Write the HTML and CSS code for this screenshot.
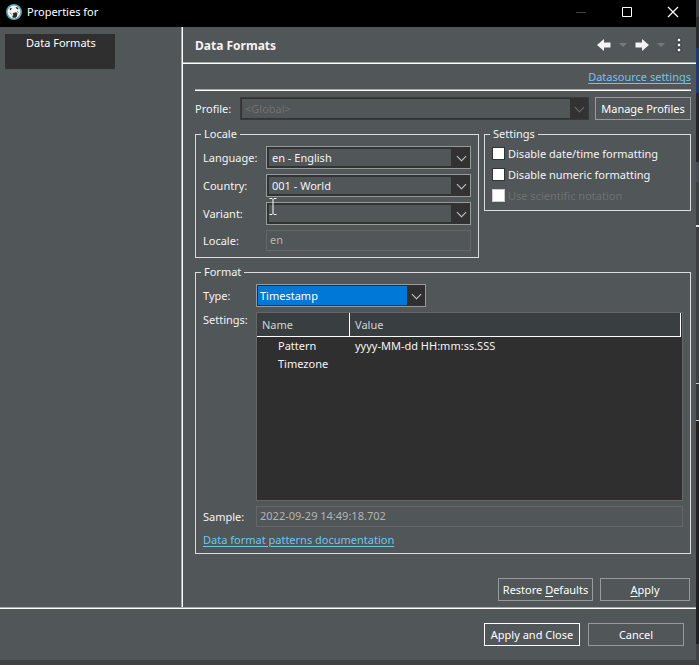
FILE: index.html
```html
<!DOCTYPE html>
<html lang="en">
<head>
    <meta charset="UTF-8">
    <meta name="viewport" content="width=device-width, initial-scale=1.0">
    <title>Properties for</title>
    <link rel="stylesheet" href="styles.css">
</head>
<body>
    <div class="desktop">
    <div class="window">
        <header class="titlebar">
            <svg class="app-icon" width="16" height="16" viewBox="0 0 16 16">
                <circle cx="8" cy="8" r="7.2" fill="#f4f1ee" stroke="#4fa8b5" stroke-width="1.6"/>
                <path d="M3.500 5 5 3.800l.8.700L4.500 6.500zM9.500 3.200h1.800l1.200 1.600-.8.800-1.300-1zM6.500 9.500l3-1.300 1.800.8-.3 3.300L9.500 13.800H6.800l-.5-1.800 1.200-1z" fill="#2b2423"/>
                <path d="M4 8.500 5.500 10.500M11.500 7l.8 2" stroke="#8d8583" fill="none"/>
            </svg>
            <span class="titlebar-text">Properties for</span>
            <button type="button" class="win-btn" aria-label="Minimize" disabled>
                <svg width="12" height="12" viewBox="0 0 12 12"><path d="M1 6.500h10" stroke="#444"/></svg>
            </button>
            <button type="button" class="win-btn" aria-label="Maximize">
                <svg width="12" height="12" viewBox="0 0 12 12"><path d="M1.500 1.500h9v9h-9z" fill="none" stroke="#fff"/></svg>
            </button>
            <button type="button" class="win-btn" aria-label="Close">
                <svg width="12" height="12" viewBox="0 0 12 12"><path d="M1 1l10 10M11 1 1 11" fill="none" stroke="#fff" stroke-width="1.200"/></svg>
            </button>
        </header>

        <div class="body">
            <nav class="sidebar">
                <a href="#formats" class="nav-item">Data Formats</a>
            </nav>

            <main class="content" id="formats">
                <div class="page-header">
                    <h1>Data Formats</h1>
                    <div class="toolbar">
                        <button type="button" class="tool-btn" aria-label="Back">
                            <svg width="16" height="16" viewBox="0 0 16 16"><path d="M1 8l7-6v3.500h6.500v5H8V14z" fill="#f4f4f4"/></svg>
                        </button>
                        <button type="button" class="tool-btn" aria-label="Back history">
                            <svg width="8" height="6" viewBox="0 0 8 6"><path d="M0 1h8L4 5z" fill="#777a7c"/></svg>
                        </button>
                        <button type="button" class="tool-btn" aria-label="Forward">
                            <svg width="16" height="16" viewBox="0 0 16 16"><path d="M15 8 8 2v3.500H1.500v5H8V14z" fill="#f4f4f4"/></svg>
                        </button>
                        <button type="button" class="tool-btn" aria-label="Forward history">
                            <svg width="8" height="6" viewBox="0 0 8 6"><path d="M0 1h8L4 5z" fill="#777a7c"/></svg>
                        </button>
                        <button type="button" class="tool-btn menu-btn" aria-label="View menu">
                            <svg width="6" height="16" viewBox="0 0 6 16"><g fill="#fff" stroke="#2f2f2f"><circle cx="3" cy="3" r="2"/><circle cx="3" cy="8" r="2"/><circle cx="3" cy="13" r="2"/></g></svg>
                        </button>
                    </div>
                </div>

                <form class="page">
                    <div class="top-link">
                        <a href="#datasource">Datasource settings</a>
                    </div>

                    <div class="profile-row">
                        <label for="profile">Profile:</label>
                        <div class="combo combo-disabled">
                            <select id="profile" disabled>
                                <option>&lt;Global&gt;</option>
                            </select>
                        </div>
                        <button type="button" class="btn btn-profiles">Manage Profiles</button>
                    </div>

                    <div class="groups">
                        <fieldset class="locale-group">
                            <legend>Locale</legend>
                            <div class="locale-grid">
                                <label for="language">Language:</label>
                                <div class="combo">
                                    <select id="language"><option>en - English</option></select>
                                </div>
                                <label for="country">Country:</label>
                                <div class="combo">
                                    <select id="country"><option>001 - World</option></select>
                                </div>
                                <label for="variant">Variant:</label>
                                <div class="combo">
                                    <select id="variant"><option></option></select>
                                    <svg class="cursor" width="8" height="17" viewBox="0 0 8 17"><path d="M.5.500h2.500l1 1 1-1h2.500M4 1.500v14M.5 16.500h2.500l1-1 1 1h2.500" fill="none" stroke="#fff"/></svg>
                                </div>
                                <label for="locale">Locale:</label>
                                <input type="text" id="locale" class="readonly" value="en" readonly>
                            </div>
                        </fieldset>

                        <fieldset class="settings-group">
                            <legend>Settings</legend>
                            <label class="check"><input type="checkbox"> Disable date/time formatting</label>
                            <label class="check"><input type="checkbox"> Disable numeric formatting</label>
                            <label class="check check-disabled"><input type="checkbox" disabled> Use scientific notation</label>
                        </fieldset>
                    </div>

                    <fieldset class="format-group">
                        <legend>Format</legend>
                        <div class="format-grid">
                            <label for="type">Type:</label>
                            <div class="combo combo-active">
                                <select id="type"><option>Timestamp</option></select>
                            </div>
                            <span class="table-label" id="settings-label">Settings:</span>
                            <div class="table-box">
                                <table aria-labelledby="settings-label">
                                    <thead>
                                        <tr><th class="col-name">Name</th><th>Value</th></tr>
                                    </thead>
                                    <tbody>
                                        <tr><td>Pattern</td><td>yyyy-MM-dd HH:mm:ss.SSS</td></tr>
                                        <tr><td>Timezone</td><td></td></tr>
                                    </tbody>
                                </table>
                            </div>
                            <label for="sample">Sample:</label>
                            <input type="text" id="sample" class="readonly" value="2022-09-29 14:49:18.702" readonly>
                        </div>
                        <a href="#patterns" class="doc-link">Data format patterns documentation</a>
                    </fieldset>

                    <div class="page-actions">
                        <button type="button" class="btn btn-restore">Restore <u>D</u>efaults</button>
                        <button type="button" class="btn btn-apply"><u>A</u>pply</button>
                    </div>
                </form>
            </main>
        </div>

        <footer class="dialog-actions">
            <button type="button" class="btn btn-default">Apply and Close</button>
            <button type="button" class="btn btn-cancel">Cancel</button>
        </footer>
    </div>
    </div>
</body>
</html>
```
FILE: styles.css
```css
* {
    box-sizing: border-box;
}
body {
    margin: 0;
    font-family: "Noto Sans", "Open Sans", sans-serif;
    font-size: 11px;
    line-height: 16px;
    color: #f4f4f4;
    background-color: #3f4244;
}
button, input, select {
    font: inherit;
    color: inherit;
}
a {
    color: #6fc5ee;
    text-underline-offset: 2px;
}
.desktop {
    min-height: 100vh;
    padding: 0 3px 5px 0;
    display: flex;
    /* strip of the main window behind the dialog */
    background: linear-gradient(#3b3f42 17px, #2b2b2b 17px, #2b2b2b 48px, #1f3b73 48px, #1f3b73 93px, #262626 93px, #262626 162px, #474b57 162px, #474b57 182px, #3b3f42 182px, #3b3f42 225px, #ddd 225px, #ddd 227px, #3b3f42 227px, #3b3f42 383px, #ccc 383px, #ccc 384px, #33373a 384px, #33373a 420px, #ccc 420px, #ccc 421px, #202020 421px, #202020 644px, #3f4244 644px) right / 3px 100% no-repeat;
}
.window {
    flex: 1;
    display: flex;
    flex-direction: column;
    background-color: #515658;
}
.titlebar {
    display: flex;
    align-items: center;
    height: 27px;
    padding: 0 0 4px 6px;
    background-color: #000;
    color: #fff;
}
.titlebar-text {
    flex: 1;
    margin-left: 5px;
}
.win-btn {
    width: 46px;
    padding: 0;
    border: none;
    background: none;
}
.win-btn svg, .app-icon, .tool-btn svg {
    display: block;
    margin: 0 auto;
}
.app-icon {
    margin: 0;
}
.body {
    flex: 1;
    display: flex;
}
.sidebar {
    width: 183px;
    padding: 7px 5px;
    border-right: 1px solid #fff;
    box-shadow: inset -1px 0 #a8a8a8;
}
.nav-item {
    display: block;
    width: 110px;
    height: 35px;
    padding: 1px 0 0 21px;
    background-color: #2f2f2f;
    color: #fff;
    text-decoration: none;
}
.content {
    flex: 1;
    display: flex;
    flex-direction: column;
}
.page-header {
    display: flex;
    justify-content: space-between;
    align-items: center;
    height: 37px;
    padding: 0 14px 0 12px;
    border-bottom: 1px solid #fff;
    box-shadow: inset 0 -1px #a8a8a8;
}
h1 {
    margin: 0;
    padding-top: 2px;
    font-size: 12px;
}
.toolbar {
    display: flex;
    align-items: center;
    gap: 7px;
}
.tool-btn {
    padding: 0;
    border: none;
    background: none;
}
.menu-btn {
    margin-left: 4px;
}
.page {
    flex: 1;
    display: flex;
    flex-direction: column;
    padding: 5px 5px 6px 12px;
}
.top-link {
    height: 22px;
    border-bottom: 1px solid #fff;
    box-shadow: inset 0 -1px #a8a8a8;
    text-align: right;
}
.profile-row {
    display: flex;
    align-items: center;
    gap: 6px;
    margin-top: 6px;
}
.profile-row label {
    width: 39px;
}
.profile-row .combo {
    flex: 1;
}
.combo {
    position: relative;
    height: 23px;
    padding: 2px;
    border: 1px solid #999;
    background-color: #323232;
}
.combo::after {
    content: "";
    position: absolute;
    right: 5px;
    top: 6px;
    width: 6px;
    height: 6px;
    border: solid #c8c8c8;
    border-width: 0 1px 1px 0;
    transform: rotate(45deg);
    pointer-events: none;
}
.combo select {
    display: block;
    width: 100%;
    height: 17px;
    padding: 0 0 0 3px;
    border: none;
    border-radius: 0;
    appearance: none;
    line-height: 16px;
    background: linear-gradient(to left, #323232 17px, #515658 17px);
}
.combo-disabled {
    padding: 1px;
    border-color: #3a3a3a;
}
.combo-disabled select {
    height: 19px;
    color: #707070;
    opacity: 1;
}
.combo-disabled::after {
    border-color: #6e6e6e;
}
.combo-active {
    width: 170px;
    padding: 1px;
    background-color: #2f2f2f;
}
.combo-active select {
    height: 19px;
    padding-left: 2px;
    color: #fff;
    background: linear-gradient(to left, #2f2f2f 17px, #0078d7 17px);
}
.btn {
    height: 23px;
    padding: 0;
    border: 1px solid #999;
    background-color: #515658;
    color: #fff;
    white-space: nowrap;
}
.btn-profiles {
    width: 96px;
}
.btn-restore {
    width: 95px;
}
.btn-apply {
    width: 90px;
}
.btn-default, .btn-cancel {
    width: 96px;
}
.btn-default {
    border-color: #fff;
}
.btn u {
    text-underline-offset: 2px;
}
fieldset {
    min-width: 0;
    margin: 0;
    padding: 0 7px;
    border: 1px solid #dcdcdc;
}
legend {
    margin-left: -2px;
    padding: 0 3px;
}
.groups {
    display: flex;
    align-items: flex-start;
    gap: 5px;
    margin-top: 6px;
}
.locale-group {
    flex: 1;
    padding-bottom: 6px;
}
.locale-grid {
    display: grid;
    grid-template-columns: 58px 1fr;
    gap: 5px;
    align-items: center;
    margin-top: 4px;
}
.readonly {
    width: 100%;
    height: 21px;
    padding: 0 3px 3px;
    border: 1px solid #666;
    background-color: transparent;
    color: #b4b4b4;
}
.cursor {
    position: absolute;
    left: 2px;
    top: -5px;
}
.settings-group {
    width: 207px;
    padding: 1px 7px 4px;
}
.check {
    display: flex;
    align-items: center;
    height: 21px;
    white-space: nowrap;
}
.check input {
    appearance: none;
    width: 13px;
    height: 13px;
    margin: 0 3px 0 0;
    border: 1px solid #333;
    background-color: #fff;
}
.check-disabled {
    color: #707070;
}
.check-disabled input {
    border-color: #ccc;
}
.format-group {
    margin-top: 6px;
    padding-bottom: 5px;
}
.format-grid {
    display: grid;
    grid-template-columns: 48px 1fr;
    gap: 5px;
    align-items: center;
    margin-top: 4px;
}
.table-label {
    align-self: start;
}
.table-box {
    height: 189px;
    padding-right: 1px;
    border: 1px solid #666;
    background-color: #2f2f2f;
}
table {
    width: 100%;
    border-spacing: 0;
}
th {
    height: 24px;
    padding: 0 5px;
    border-right: 1px solid #fff;
    border-bottom: 1px solid #fff;
    background-color: #393e41;
    color: #d0d4d6;
    font-weight: normal;
    text-align: left;
}
.col-name {
    width: 93px;
}
td {
    height: 18px;
    padding: 0 5px;
}
td:first-child {
    padding-left: 21px;
}
.doc-link {
    display: inline-block;
    margin-top: 5px;
}
.page-actions {
    display: flex;
    justify-content: flex-end;
    gap: 7px;
    margin-top: auto;
    padding-right: 1px;
}
.dialog-actions {
    display: flex;
    justify-content: flex-end;
    gap: 8px;
    padding: 14px 12px;
    border-top: 2px solid #fff;
    border-top: 1px solid #a8a8a8;
    box-shadow: inset 0 1px #fff;
    padding-top: 15px;
}
```
